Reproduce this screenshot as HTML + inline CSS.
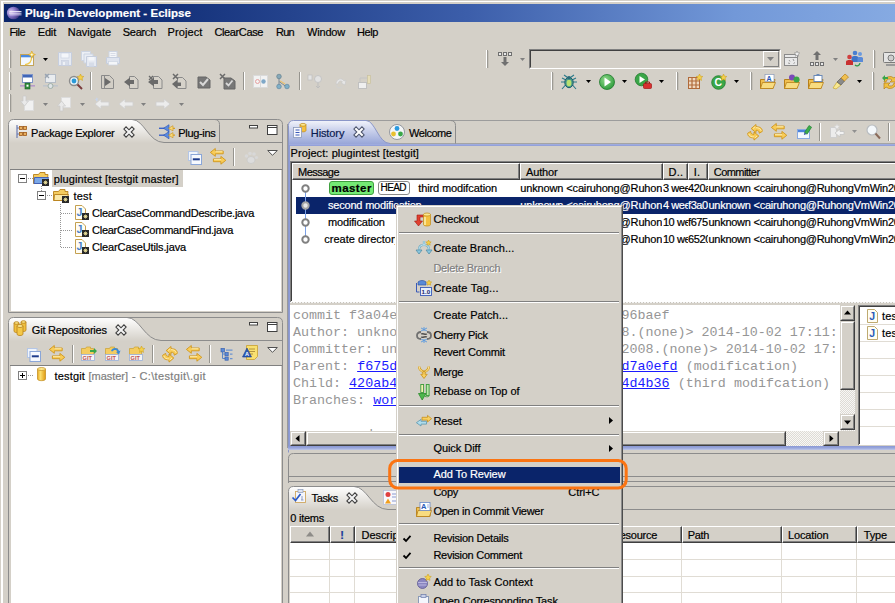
<!DOCTYPE html>
<html><head><meta charset="utf-8"><title>Plug-in Development - Eclipse</title>
<style>
html,body{margin:0;padding:0;}
body{width:895px;height:603px;overflow:hidden;position:relative;background:#d4d0c8;font-family:"Liberation Sans",sans-serif;font-size:11px;}
div,svg,span.t{position:absolute;}
span.t{white-space:pre;-webkit-text-stroke:0.2px;}
span.m{-webkit-text-stroke:0;}
svg{overflow:visible;}
</style></head><body>
<div style="left:1px;top:1px;width:894px;height:1px;background:#fff"></div>
<div style="left:1px;top:1px;width:1.6px;height:602px;background:#fff"></div>
<div style="left:4px;top:4px;width:891px;height:18px;background:linear-gradient(90deg,#0a246a 0%,#0c2870 12%,#3c5eaa 52%,#7298d8 82%,#86aae2 100%)"></div>
<svg style="left:6px;top:6px;" width="16" height="14" viewBox="0 0 16 14"><defs><radialGradient id="ecl" cx="30%" cy="40%" r="80%"><stop offset="0" stop-color="#d8c8f0"/><stop offset="0.450" stop-color="#8a78c8"/><stop offset="1" stop-color="#2a2470"/></radialGradient></defs>
<ellipse cx="7.500" cy="7" rx="6.600" ry="6.300" fill="url(#ecl)"/><rect x="3.500" y="5" width="12" height="0.900" fill="#f0ecfa"/><rect x="3" y="6.700" width="12.500" height="0.900" fill="#f0ecfa"/><rect x="3.500" y="8.400" width="12" height="0.900" fill="#d8d0f0"/></svg>
<span class="t" style="left:25px;top:5.9px;font-size:11.5px;line-height:14px;color:#fff;letter-spacing:0.039px;font-weight:bold;">Plug-in Development - Eclipse</span>
<span class="t" style="left:9.4px;top:24.6px;font-size:11px;line-height:14px;color:#000;letter-spacing:-0.531px;">File</span>
<span class="t" style="left:37.8px;top:24.6px;font-size:11px;line-height:14px;color:#000;letter-spacing:-0.189px;">Edit</span>
<span class="t" style="left:67.8px;top:24.6px;font-size:11px;line-height:14px;color:#000;letter-spacing:-0.027px;">Navigate</span>
<span class="t" style="left:122.8px;top:24.6px;font-size:11px;line-height:14px;color:#000;letter-spacing:-0.276px;">Search</span>
<span class="t" style="left:167.5px;top:24.6px;font-size:11px;line-height:14px;color:#000;letter-spacing:0.109px;">Project</span>
<span class="t" style="left:214.5px;top:24.6px;font-size:11px;line-height:14px;color:#000;letter-spacing:-0.385px;">ClearCase</span>
<span class="t" style="left:276px;top:24.6px;font-size:11px;line-height:14px;color:#000;letter-spacing:-0.726px;">Run</span>
<span class="t" style="left:307px;top:24.6px;font-size:11px;line-height:14px;color:#000;letter-spacing:-0.187px;">Window</span>
<span class="t" style="left:357px;top:24.6px;font-size:11px;line-height:14px;color:#000;letter-spacing:-0.406px;">Help</span>
<div style="left:9px;top:50px;width:1px;height:18px;background:#fff"></div>
<div style="left:10px;top:50px;width:1px;height:18px;background:#9c9a94"></div>
<div style="left:11px;top:51px;width:1px;height:17px;background:#c4c0b8"></div>
<div style="left:9px;top:72px;width:1px;height:18px;background:#fff"></div>
<div style="left:10px;top:72px;width:1px;height:18px;background:#9c9a94"></div>
<div style="left:11px;top:73px;width:1px;height:17px;background:#c4c0b8"></div>
<div style="left:9px;top:94px;width:1px;height:18px;background:#fff"></div>
<div style="left:10px;top:94px;width:1px;height:18px;background:#9c9a94"></div>
<div style="left:11px;top:95px;width:1px;height:17px;background:#c4c0b8"></div>
<div style="left:486px;top:50px;width:1px;height:18px;background:#fff"></div>
<div style="left:487px;top:50px;width:1px;height:18px;background:#9c9a94"></div>
<div style="left:488px;top:51px;width:1px;height:17px;background:#c4c0b8"></div>
<div style="left:551px;top:72px;width:1px;height:18px;background:#fff"></div>
<div style="left:552px;top:72px;width:1px;height:18px;background:#9c9a94"></div>
<div style="left:553px;top:73px;width:1px;height:17px;background:#c4c0b8"></div>
<div style="left:676px;top:72px;width:1px;height:18px;background:#fff"></div>
<div style="left:677px;top:72px;width:1px;height:18px;background:#9c9a94"></div>
<div style="left:678px;top:73px;width:1px;height:17px;background:#c4c0b8"></div>
<div style="left:750px;top:72px;width:1px;height:18px;background:#fff"></div>
<div style="left:751px;top:72px;width:1px;height:18px;background:#9c9a94"></div>
<div style="left:752px;top:73px;width:1px;height:17px;background:#c4c0b8"></div>
<div style="left:872px;top:72px;width:1px;height:18px;background:#fff"></div>
<div style="left:873px;top:72px;width:1px;height:18px;background:#9c9a94"></div>
<div style="left:874px;top:73px;width:1px;height:17px;background:#c4c0b8"></div>
<div style="left:873px;top:50px;width:1px;height:18px;background:#fff"></div>
<div style="left:874px;top:50px;width:1px;height:18px;background:#9c9a94"></div>
<div style="left:875px;top:51px;width:1px;height:17px;background:#c4c0b8"></div>
<svg style="left:20px;top:51px;" width="16" height="16" viewBox="0 0 16 16"><rect x="0.500" y="3.500" width="13" height="11" fill="#f2f8ff" stroke="#c4a458"/><rect x="1" y="4" width="12" height="2.300" fill="#4a8ae0"/><path d="M11.600 6C11.600 10.500 9 13.300 5 13.600" stroke="#f0c848" stroke-width="1.300" fill="none"/><path d="M11.8 0.0l1.100 2.500 2.500 1.100-2.500 1.100-1.100 2.500-1.100-2.500-2.500-1.100 2.500-1.100z" fill="#f8dc68" stroke="#d8a020" stroke-width=".6"/><circle cx="11.8" cy="3.6" r=".9" fill="#fffbe8"/></svg>
<svg style="left:43px;top:58px;" width="5" height="3" viewBox="0 0 5 3"><path d="M0 0H5L2.5 3Z" fill="#000"/></svg>
<svg style="left:57px;top:51px;" width="16" height="16" viewBox="0 0 16 16"><path d="M1.500 1.500h13v13h-13z" fill="#e6eaf2" stroke="#c6cede"/><rect x="4" y="2" width="8" height="5" fill="#f4f6fa" stroke="#ccd4e2" stroke-width=".7"/><rect x="4.500" y="9.500" width="7" height="5" fill="#d6dce8" stroke="#c6cede" stroke-width=".6"/><rect x="6" y="11" width="2" height="3" fill="#eef1f6"/></svg>
<svg style="left:81px;top:51px;" width="16" height="16" viewBox="0 0 16 16"><path d="M0.500 0.500h9v9h-9z" fill="#eceff5" stroke="#ccd4e2"/><path d="M3 3h9v9h-9z" fill="#e9edf4" stroke="#ccd4e2"/><path d="M5.500 5.500h10v10h-10z" fill="#e6eaf2" stroke="#c6cede"/><rect x="7.500" y="6" width="6" height="3.500" fill="#f4f6fa"/><rect x="8" y="11.500" width="5" height="4" fill="#d6dce8"/></svg>
<svg style="left:105px;top:51px;" width="16" height="16" viewBox="0 0 16 16"><rect x="4" y="0.500" width="8" height="6" fill="#f4f6f9" stroke="#ccd4e2"/><path d="M5.500 2.500h5M5.500 4.500h5" stroke="#d0d6e2" stroke-width=".8"/><path d="M1.500 6.500h13v6h-13z" fill="#dfe4ee" stroke="#c6cede"/><rect x="3.500" y="10.500" width="9" height="3.500" fill="#f4f6f9" stroke="#ccd4e2" stroke-width=".7"/></svg>
<svg style="left:20px;top:74px;" width="16" height="16" viewBox="0 0 16 16"><rect x="2.500" y="0.500" width="10" height="8" fill="#fff" stroke="#7f95c8"/><rect x="3" y="1" width="9" height="2.500" fill="#3f66b8"/><rect x="0" y="11" width="15" height="1.600" fill="#b79ac8"/><rect x="5" y="9" width="5" height="6" fill="#2e8b3a" stroke="#1c5e26" stroke-width=".6"/><rect x="6.500" y="10.700" width="2" height="2" fill="#fff"/></svg>
<svg style="left:43px;top:74px;" width="16" height="16" viewBox="0 0 16 16"><rect x="2.500" y="0.500" width="10" height="8" fill="#e9ecef" stroke="#b4bcc6"/><path d="M2 0l4 4M6 0l-4 4" stroke="#9aa4b0" stroke-width="1.200"/><rect x="0" y="11" width="15" height="1.600" fill="#c0c6cc"/><circle cx="7.500" cy="12" r="2.500" fill="#dfe3e6" stroke="#9fb0a8"/></svg>
<svg style="left:68px;top:74px;" width="16" height="16" viewBox="0 0 16 16"><circle cx="6" cy="7" r="4.500" fill="#e8f4fb" stroke="#8c8c8c" stroke-width="1.400"/><circle cx="6" cy="7" r="2.400" fill="#2a9ad8"/><path d="M9.500 10.500l4.500 4.500" stroke="#7a3b3b" stroke-width="2"/><path d="M12.500 0l1 2.200 2.300.3-1.700 1.600.4 2.300-2-1.100-2 1.100.4-2.300-1.700-1.600 2.300-.3z" fill="#f6d04a" stroke="#c89a10" stroke-width=".5"/></svg>
<div style="left:90px;top:72px;width:1px;height:18px;background:#96948e"></div>
<div style="left:91px;top:72px;width:1px;height:18px;background:#fff"></div>
<svg style="left:100px;top:74px;" width="16" height="16" viewBox="0 0 16 16"><path d="M1.500 1.500h8l4 4v9h-12z" fill="#d2cec6" stroke="#8a8a8a"/><path d="M4.500 1.500v13" stroke="#8a8a8a"/><path d="M5 4l6 4-6 4z" fill="#6a6a6a"/></svg>
<svg style="left:124px;top:74px;" width="16" height="16" viewBox="0 0 16 16"><path d="M5.500 2.500h5l3.500 3.500v8.500h-8.500z" fill="#d6d2ca" stroke="#8a8a8a"/><path d="M0 8l6-4.500v2.500h4v4h-4v2.500z" fill="#6a6a6a"/></svg>
<svg style="left:148px;top:74px;" width="16" height="16" viewBox="0 0 16 16"><path d="M5.500 2.500h5l3.500 3.500v8.500h-8.500z" fill="#d6d2ca" stroke="#8a8a8a"/><path d="M0 8l6-4.500v2.500h4v4h-4v2.500z" fill="#6a6a6a"/><path d="M1 2l4 4M5 2l-4 4" stroke="#6a6a6a" stroke-width="1.300"/></svg>
<svg style="left:172px;top:74px;" width="16" height="16" viewBox="0 0 16 16"><path d="M5.500 3.500h5l3.500 3.500v7.500h-8.500z" fill="#d6d2ca" stroke="#8a8a8a"/><path d="M0 10l5-4v2.500h4v3.500h-4v2.500z" fill="#6a6a6a"/><path d="M1 0l5 5M6 0l-5 5" stroke="#6a6a6a" stroke-width="1.500"/></svg>
<svg style="left:196px;top:74px;" width="16" height="16" viewBox="0 0 16 16"><path d="M2 3h8l4 3v8h-12z" fill="#777" stroke="#666"/><path d="M4 8l3 3 5-6" stroke="#d8d8d8" stroke-width="2" fill="none"/></svg>
<svg style="left:220px;top:74px;" width="16" height="16" viewBox="0 0 16 16"><path d="M4 4h7l4 3v8h-11z" fill="#777" stroke="#666"/><path d="M6 9l2.500 2.500 4-5" stroke="#d8d8d8" stroke-width="1.800" fill="none"/><path d="M0 0l5 5M5 0l-5 5" stroke="#6a6a6a" stroke-width="1.500"/></svg>
<div style="left:243px;top:72px;width:1px;height:18px;background:#96948e"></div>
<div style="left:244px;top:72px;width:1px;height:18px;background:#fff"></div>
<svg style="left:253px;top:74px;" width="16" height="16" viewBox="0 0 16 16"><rect x="0.500" y="1.500" width="14" height="12" fill="#f2f2f2" stroke="#dadada"/><circle cx="4.500" cy="7.500" r="2" fill="none" stroke="#e6a0a0"/><circle cx="10.500" cy="7.500" r="2.200" fill="#7fa8c8"/><path d="M7.500 1.500v12" stroke="#dadada"/></svg>
<svg style="left:276px;top:74px;" width="16" height="16" viewBox="0 0 16 16"><path d="M3 3v9M3 7.500l7 5" stroke="#7a8a98" stroke-width="1"/><path d="M4 7l5 3" stroke="#e8c070" stroke-width="1.200"/><circle cx="3" cy="2.500" r="2.300" fill="#86a8b8" stroke="#5a7888" stroke-width=".6"/><circle cx="3" cy="12.500" r="2.300" fill="#7fb0c8" stroke="#5a8098" stroke-width=".6"/><circle cx="11" cy="12.500" r="2.300" fill="#7fb0c8" stroke="#5a8098" stroke-width=".6"/></svg>
<div style="left:299px;top:72px;width:1px;height:18px;background:#96948e"></div>
<div style="left:300px;top:72px;width:1px;height:18px;background:#fff"></div>
<svg style="left:307px;top:74px;" width="16" height="16" viewBox="0 0 16 16"><rect x="1" y="1" width="4" height="5" fill="#e4e4e4" stroke="#bdbdbd" stroke-width=".7"/><circle cx="11" cy="5" r="3.500" fill="#e2e2e2" stroke="#c4c4c4"/><path d="M11 9v5l-2-2m2 2l2-2" stroke="#bdbdbd" fill="none"/></svg>
<svg style="left:333px;top:74px;" width="16" height="16" viewBox="0 0 16 16"><path d="M3 10c0-5 6-7 8-3l2-1-1 5-4-2 1.500-1c-1.500-2-4-1-4.500 2z" fill="#e6e6e6" stroke="#c8c8c8" stroke-width=".7"/><path d="M3 11l2 3 4-1" stroke="#d0d0d0" fill="none"/></svg>
<svg style="left:357px;top:74px;" width="16" height="16" viewBox="0 0 16 16"><rect x="1.500" y="8.500" width="8" height="6" fill="#efefef" stroke="#c0c0c0"/><rect x="10.500" y="1.500" width="3" height="8" fill="#e6ddb8" stroke="#c8c0a0" stroke-width=".7"/><path d="M3 8v-4h7" stroke="#c4c4c4" fill="none"/></svg>
<svg style="left:20px;top:96px;" width="16" height="16" viewBox="0 0 16 16"><path d="M4.500 4.500h9v10h-9z" fill="#f1f1f1" stroke="#dcdcdc"/><path d="M3 0h3v5h2.500l-4 5-4-5h2.500z" fill="#e9e9e9" stroke="#c9c9c9" stroke-width=".7"/></svg>
<svg style="left:43px;top:103px;" width="5" height="3" viewBox="0 0 5 3"><path d="M0 0H5L2.5 3Z" fill="#808080"/></svg>
<svg style="left:57px;top:96px;" width="16" height="16" viewBox="0 0 16 16"><path d="M4.500 1.500h9v10h-9z" fill="#f1f1f1" stroke="#dcdcdc"/><path d="M3 15h3v-5h2.500l-4-5-4 5h2.500z" fill="#e9e9e9" stroke="#c9c9c9" stroke-width=".7"/></svg>
<svg style="left:80px;top:103px;" width="5" height="3" viewBox="0 0 5 3"><path d="M0 0H5L2.5 3Z" fill="#808080"/></svg>
<svg style="left:94px;top:96px;" width="16" height="16" viewBox="0 0 16 16"><path d="M1 8l6-5v3h8v4h-8v3z" fill="#ececec" stroke="#cfcfcf" stroke-width=".8"/><path d="M2 1l1 1.500 1.500-.5-1 1.500 1 1.500-1.500-.5-1 1.500v-2l-1.500-.5 1.500-.5z" fill="#c8d4e8"/></svg>
<svg style="left:118px;top:96px;" width="16" height="16" viewBox="0 0 16 16"><path d="M1 8l6-5v3h8v4h-8v3z" fill="#ececec" stroke="#cfcfcf" stroke-width=".8"/></svg>
<svg style="left:141px;top:103px;" width="5" height="3" viewBox="0 0 5 3"><path d="M0 0H5L2.5 3Z" fill="#808080"/></svg>
<svg style="left:155px;top:96px;" width="16" height="16" viewBox="0 0 16 16"><path d="M15 8l-6-5v3h-8v4h8v3z" fill="#ececec" stroke="#cfcfcf" stroke-width=".8"/></svg>
<svg style="left:179px;top:103px;" width="5" height="3" viewBox="0 0 5 3"><path d="M0 0H5L2.5 3Z" fill="#808080"/></svg>
<svg style="left:497px;top:51px;" width="16" height="16" viewBox="0 0 16 16"><rect x="1.500" y="1.500" width="3" height="3" fill="#e8e8e8" stroke="#707070"/><rect x="6.500" y="1.500" width="3" height="3" fill="#e8e8e8" stroke="#707070"/><rect x="11.500" y="1.500" width="3" height="3" fill="#e8e8e8" stroke="#707070"/><path d="M6.500 6h3v5h2.500l-4 4-4-4h2.500z" fill="#707070"/></svg>
<svg style="left:520px;top:58px;" width="5" height="3" viewBox="0 0 5 3"><path d="M0 0H5L2.5 3Z" fill="#808080"/></svg>
<div style="left:529px;top:49px;width:252px;height:20px;background:#d4d0c8;box-sizing:border-box;border:1px solid;border-color:#808080 #fff #fff #808080"></div>
<div style="left:530px;top:50px;width:250px;height:18px;box-sizing:border-box;border:1px solid;border-color:#404040 #d4d0c8 #d4d0c8 #404040"></div>
<div style="left:763px;top:51px;width:16px;height:16px;background:#d4d0c8;box-sizing:border-box;border:1px solid;border-color:#fff #808080 #808080 #fff"></div>
<svg style="left:767px;top:57px;" width="7" height="4" viewBox="0 0 7 4"><path d="M0 0H7L3.500 4Z" fill="#808080"/></svg>
<svg style="left:784px;top:51px;" width="17" height="16" viewBox="0 0 17 16"><rect x="0.500" y="3.500" width="13" height="11" fill="#e9e9e9" stroke="#8a8a8a"/><path d="M.5 6.500h13" stroke="#8a8a8a"/><path d="M5 9l1 1.500M9 8l1 2M4 12l2 .5M9.500 12.500l1.500-1" stroke="#9a9a9a"/><path d="M13 0l.8 1.800 1.900.2-1.400 1.300.4 1.900-1.700-1-1.700 1 .4-1.900-1.400-1.300 1.900-.2z" fill="#f2f2f2" stroke="#8a8a8a" stroke-width=".6"/></svg>
<svg style="left:809px;top:51px;" width="16" height="16" viewBox="0 0 16 16"><path d="M6.500 9v-5h-2.500l4-4 4 4h-2.500v5z" fill="#707070"/><rect x="1.500" y="11.500" width="3" height="3" fill="#e8e8e8" stroke="#707070"/><rect x="6.500" y="11.500" width="3" height="3" fill="#e8e8e8" stroke="#707070"/><rect x="11.500" y="11.500" width="3" height="3" fill="#e8e8e8" stroke="#707070"/></svg>
<svg style="left:833px;top:58px;" width="5" height="3" viewBox="0 0 5 3"><path d="M0 0H5L2.5 3Z" fill="#808080"/></svg>
<svg style="left:846px;top:50px;" width="18" height="16" viewBox="0 0 18 16"><circle cx="9" cy="3" r="2.300" fill="#4a7fd0"/><path d="M5.500 12v-4.500c0-2 7-2 7 0v4.500z" fill="#3f74c8"/><circle cx="14" cy="4" r="2" fill="#6a9ae0"/><path d="M11.500 12v-4c0-1.500 5.500-1.500 5.500 0v4z" fill="#5a8ad8"/><circle cx="3.500" cy="7" r="2.300" fill="#d04040"/><path d="M0 15v-3.500c0-2 7-2 7 0v3.500z" fill="#c83030"/><path d="M9 15a3 3 0 0 0 5-2" stroke="#2a9a4a" fill="none" stroke-width="1.300"/></svg>
<svg style="left:883px;top:51px;" width="16" height="16" viewBox="0 0 16 16"><rect x="0.500" y="1.500" width="14" height="10" rx="1" fill="#e4e4e4" stroke="#7a7a7a"/><circle cx="8" cy="7" r="3" fill="#cfcfcf" stroke="#7a7a7a"/><rect x="3" y="13" width="10" height="2" fill="#9a9a9a"/></svg>
<svg style="left:561px;top:74px;" width="17" height="16" viewBox="0 0 17 16"><path d="M8 4.500L3 1M8 4.500l5-3.500M4 8H0M12 8h4M4.500 11l-3.500 4M11.500 11l3.500 4M5 6L1 4M11 6l4-2" stroke="#2a7a8a" stroke-width="1.100"/><ellipse cx="8" cy="8.500" rx="4.200" ry="5.200" fill="#4a9a8a" stroke="#1a5a6a"/><ellipse cx="8" cy="9" rx="2.400" ry="3.200" fill="#b8e070"/><circle cx="8" cy="3.800" r="1.800" fill="#2a6a7a"/></svg>
<svg style="left:586px;top:80px;" width="5" height="3" viewBox="0 0 5 3"><path d="M0 0H5L2.5 3Z" fill="#000"/></svg>
<svg style="left:599px;top:74px;" width="16" height="16" viewBox="0 0 16 16"><defs><radialGradient id="rg" cx="40%" cy="35%" r="70%"><stop offset="0" stop-color="#8fd88a"/><stop offset="1" stop-color="#2c9a3a"/></radialGradient></defs><circle cx="8" cy="8" r="7.500" fill="url(#rg)" stroke="#1f7a2c" stroke-width=".8"/><path d="M5.500 3.500l6.500 4.500-6.500 4.500z" fill="#fff"/></svg>
<svg style="left:622px;top:80px;" width="5" height="3" viewBox="0 0 5 3"><path d="M0 0H5L2.5 3Z" fill="#000"/></svg>
<svg style="left:635px;top:73px;" width="18" height="17" viewBox="0 0 18 17"><circle cx="6.500" cy="6.500" r="6.300" fill="#3aa648" stroke="#1f7a2c" stroke-width=".8"/><path d="M4.500 3l5.500 3.500-5.500 3.500z" fill="#fff"/><rect x="8.500" y="10.500" width="8" height="5" rx="1" fill="#d83030" stroke="#a01818" stroke-width=".7"/><path d="M10.500 10.500v-1.500h4v1.500" stroke="#a01818" fill="none"/></svg>
<svg style="left:659px;top:80px;" width="5" height="3" viewBox="0 0 5 3"><path d="M0 0H5L2.5 3Z" fill="#000"/></svg>
<svg style="left:687px;top:74px;" width="16" height="16" viewBox="0 0 16 16"><rect x="1.500" y="3.500" width="11" height="11" fill="#f0d8c0" stroke="#b06a3a"/><path d="M5 3v12M9 3v12M1 7h12M1 11h12" stroke="#b06a3a" stroke-width="1.200"/><path d="M12.500 0l1 2.200 2.300.3-1.700 1.600.4 2.300-2-1.100-2 1.100.4-2.300-1.700-1.600 2.300-.3z" fill="#f6d04a" stroke="#c89a10" stroke-width=".5"/></svg>
<svg style="left:711px;top:74px;" width="16" height="16" viewBox="0 0 16 16"><circle cx="7.500" cy="8.500" r="6.800" fill="#3aa648" stroke="#1f7a2c" stroke-width=".8"/><text x="3.4" y="12.3" font-family="Liberation Sans,sans-serif" font-size="10.5" font-weight="bold" fill="#fff">C</text><path d="M12.500 0l1 2.200 2.300.3-1.700 1.600.4 2.300-2-1.100-2 1.100.4-2.300-1.700-1.600 2.300-.3z" fill="#f6d04a" stroke="#c89a10" stroke-width=".5"/></svg>
<svg style="left:734px;top:80px;" width="5" height="3" viewBox="0 0 5 3"><path d="M0 0H5L2.5 3Z" fill="#000"/></svg>
<svg style="left:760px;top:74px;" width="16" height="16" viewBox="0 0 16 16"><path d="M0.500 5.500h5l1.500-2h5v2h3l-2 9h-12.500z" fill="#f0c050" stroke="#b8801a"/><path d="M2.500 8.500h13l-2.500 6h-12.500z" fill="#f8dc80" stroke="#b8801a" stroke-width=".8"/><rect x="5" y="0.500" width="9" height="7" fill="#fff" stroke="#8a9ab8" stroke-width=".7"/><text x="6.6" y="6.6" font-family="Liberation Sans,sans-serif" font-size="7" font-weight="bold" fill="#2a5ab8">A</text></svg>
<svg style="left:784px;top:74px;" width="16" height="16" viewBox="0 0 16 16"><path d="M0.500 5.500h5l1.500-2h5v2h3l-2 9h-12.500z" fill="#f0c050" stroke="#b8801a"/><path d="M2.500 8.500h13l-2.500 6h-12.500z" fill="#f8dc80" stroke="#b8801a" stroke-width=".8"/><circle cx="8" cy="3.500" r="3" fill="#7a4ab8"/><circle cx="12.500" cy="5.500" r="3" fill="#3aa648"/></svg>
<svg style="left:808px;top:74px;" width="16" height="16" viewBox="0 0 16 16"><path d="M0.500 5.500h5l1.500-2h5v2h3l-2 9h-12.500z" fill="#f0c050" stroke="#b8801a"/><path d="M2.500 8.500h13l-2.500 6h-12.500z" fill="#f8dc80" stroke="#b8801a" stroke-width=".8"/><rect x="6" y="1.500" width="8" height="6" fill="#fff" stroke="#6a8ab8"/><rect x="8.500" y="0" width="3" height="2" fill="#6a8ab8"/></svg>
<svg style="left:832px;top:74px;" width="17" height="16" viewBox="0 0 17 16"><path d="M1 14l4-6 4 3-5 4z" fill="#f8e890" stroke="#c8a830" stroke-width=".7"/><path d="M5 8l4-4 3.500 3-3.500 4z" fill="#8a8a8a" stroke="#5a5a5a" stroke-width=".7"/><path d="M9 4l4-4 3.500 3-4 4z" fill="#f0c050" stroke="#b8801a" stroke-width=".7"/></svg>
<svg style="left:857px;top:80px;" width="5" height="3" viewBox="0 0 5 3"><path d="M0 0H5L2.5 3Z" fill="#000"/></svg>
<svg style="left:882px;top:74px;" width="16" height="16" viewBox="0 0 16 16"><path d="M2 8a6 6 0 0 1 10-4l2-2v6h-6l2-2a3.500 3.500 0 0 0-6 2z" fill="#f0c040" stroke="#b8801a" stroke-width=".7"/><path d="M14 9a6 6 0 0 1-10 4l-2 2v-6h6l-2 2a3.500 3.500 0 0 0 6-2z" fill="#f0c040" stroke="#b8801a" stroke-width=".7"/><path d="M0 4l3-3v2h3v2h-3v2z" fill="#3aa648"/></svg>
<svg style="left:8px;top:119px;overflow:hidden;" width="275" height="194" viewBox="0 0 275 194"><defs><linearGradient id="gw" x1="0" y1="0" x2="0" y2="1"><stop offset="0" stop-color="#ffffff"/><stop offset="1" stop-color="#d4d0c8"/></linearGradient></defs><path d="M0.5 24.0V5.5Q0.5 0.5 5.5 0.5H124C136.16 0.5 140.64 23.5 156 23.5V24.0Z" fill="url(#gw)"/><path d="M0.5 193.5V5.5Q0.5 0.5 5.5 0.5H269.5Q274.5 0.5 274.5 5.5V193.5H0.5" fill="none" stroke="#8c8c8c"/><path d="M156 23.5H274.5" fill="none" stroke="#8c8c8c"/><path d="M124 0.5C136.16 0.5 140.64 23.5 156 23.5" fill="none" stroke="#8c8c8c"/><path d="M206.5 0.5Q211.5 0.5 211.5 5.5V23.5" fill="none" stroke="#8c8c8c"/></svg>
<svg style="left:16px;top:125px;" width="12" height="14" viewBox="0 0 12 14"><path d="M1 0v13" stroke="#6a7ab0" stroke-width="1.200"/><g fill="#e8b060" stroke="#a05a18" stroke-width=".8"><rect x="3.500" y="1.500" width="3" height="3"/><rect x="7.500" y="1.500" width="3" height="3"/><rect x="3.500" y="7.500" width="3" height="3"/><rect x="7.500" y="7.500" width="3" height="3"/></g><path d="M1 3h2M1 9h2" stroke="#6a7ab0"/></svg>
<span class="t" style="left:31px;top:125.8px;font-size:11px;line-height:14px;color:#000;letter-spacing:-0.208px;">Package Explorer</span>
<svg style="left:122.5px;top:125.5px;" width="12" height="12" viewBox="0 0 11 11"><path d="M0.800 2.800L2.800 0.800 5.500 3.500 8.200 0.800 10.200 2.800 7.500 5.500 10.200 8.200 8.200 10.200 5.500 7.500 2.800 10.200 0.800 8.200 3.500 5.500Z" fill="#f4f4f4" stroke="#404040" stroke-width="1" stroke-linejoin="miter"/></svg>
<svg style="left:159px;top:124px;" width="16" height="16" viewBox="0 0 16 16"><path d="M0 4.3H6" stroke="#3a62c8" stroke-width="1.400"/><path d="M4.500 4.3L10 0.6999999999999997V7.9Z" fill="#5a8ae0" stroke="#2a52b0" stroke-width=".6"/><path d="M9.500 4.3L14 1.6999999999999997V6.9Z" fill="#f8d878" stroke="#c8901c" stroke-width=".6"/><path d="M14 4.3H16" stroke="#d8a020" stroke-width="1.200"/><path d="M0 11.2H6" stroke="#3a62c8" stroke-width="1.400"/><path d="M4.500 11.2L10 7.6V14.799999999999999Z" fill="#5a8ae0" stroke="#2a52b0" stroke-width=".6"/><path d="M9.500 11.2L14 8.6V13.799999999999999Z" fill="#f8d878" stroke="#c8901c" stroke-width=".6"/><path d="M14 11.2H16" stroke="#d8a020" stroke-width="1.200"/></svg>
<span class="t" style="left:178.3px;top:125.8px;font-size:11px;line-height:14px;color:#000;letter-spacing:-0.33px;">Plug-ins</span>
<svg style="left:249px;top:125px;" width="10" height="4" viewBox="0 0 10 4"><rect x="0.500" y="0.500" width="8" height="2.500" fill="#fff" stroke="#404040"/></svg>
<svg style="left:267px;top:125px;" width="11" height="11" viewBox="0 0 11 11"><rect x="0.500" y="0.500" width="9.500" height="9" fill="#fff" stroke="#404040"/><path d="M0.500 2.500h9.500" stroke="#404040"/></svg>
<svg style="left:188px;top:151px;" width="14" height="14" viewBox="0 0 14 14"><rect x="0.500" y="0.500" width="9.500" height="9" fill="#f0f5fc" stroke="#b4c6e6"/><rect x="3" y="3.500" width="10.500" height="10" fill="#f6f9fe" stroke="#8aa6d8"/><rect x="4.800" y="7.300" width="7" height="2" fill="#1e3c8c"/></svg>
<svg style="left:210px;top:148px;" width="16" height="17" viewBox="0 0 16 17"><path d="M0.400 4.400L5.300 0.500V3H13.200V5.800H5.300V8.300Z" fill="#f8cc58" stroke="#d0961c" stroke-width=".9" stroke-linejoin="round"/><path d="M5.500 3.700H12.500" stroke="#fff4c0" stroke-width=".8"/><path d="M15.800 12.300L10.900 8.400V10.900H3.400V13.700H10.900V16.200Z" fill="#f8cc58" stroke="#d0961c" stroke-width=".9" stroke-linejoin="round"/><path d="M4 11.600H11" stroke="#fff4c0" stroke-width=".8"/></svg>
<div style="left:233px;top:148px;width:1px;height:18px;background:#96948e"></div>
<div style="left:234px;top:148px;width:1px;height:18px;background:#fff"></div>
<svg style="left:244px;top:150px;" width="14" height="14" viewBox="0 0 14 14"><ellipse cx="7" cy="10" rx="4" ry="3.500" fill="#dcdcdc" stroke="#c4c4c4" stroke-width=".6"/><circle cx="2.500" cy="6" r="1.800" fill="#d8d8d8"/><circle cx="6" cy="3.500" r="1.800" fill="#d8d8d8"/><circle cx="10" cy="4" r="1.800" fill="#d8d8d8"/><circle cx="12.500" cy="7.500" r="1.600" fill="#d8d8d8"/></svg>
<svg style="left:267px;top:150px;" width="11" height="6" viewBox="0 0 11 6"><path d="M0.700 0.500H10.300L5.500 5.300Z" fill="#fff" stroke="#505050" stroke-width="1"/></svg>
<div style="left:10px;top:169px;width:272px;height:1px;background:#808080"></div>
<div style="left:11px;top:170px;width:270px;height:141px;background:#fff"></div>
<div style="left:52px;top:170px;width:131px;height:17px;background:#d4d0c8"></div>
<svg style="left:18px;top:174px;" width="9" height="9" viewBox="0 0 9 9"><rect x="0.500" y="0.500" width="8" height="8" fill="#fff" stroke="#808080"/><path d="M2 4.500h5" stroke="#000"/></svg>
<div style="left:28px;top:178px;width:6px;height:1px;background:repeating-linear-gradient(90deg,#969696 0 1px,transparent 1px 2px)"></div>
<div style="left:41px;top:186px;width:1px;height:6px;background:repeating-linear-gradient(180deg,#969696 0 1px,transparent 1px 2px)"></div>
<svg style="left:37px;top:191px;" width="9" height="9" viewBox="0 0 9 9"><rect x="0.500" y="0.500" width="8" height="8" fill="#fff" stroke="#808080"/><path d="M2 4.500h5" stroke="#000"/></svg>
<div style="left:47px;top:195px;width:6px;height:1px;background:repeating-linear-gradient(90deg,#969696 0 1px,transparent 1px 2px)"></div>
<div style="left:60px;top:204px;width:1px;height:44px;background:repeating-linear-gradient(180deg,#969696 0 1px,transparent 1px 2px)"></div>
<div style="left:61px;top:213px;width:12px;height:1px;background:repeating-linear-gradient(90deg,#969696 0 1px,transparent 1px 2px)"></div>
<div style="left:61px;top:230px;width:12px;height:1px;background:repeating-linear-gradient(90deg,#969696 0 1px,transparent 1px 2px)"></div>
<div style="left:61px;top:247px;width:12px;height:1px;background:repeating-linear-gradient(90deg,#969696 0 1px,transparent 1px 2px)"></div>
<svg style="left:33px;top:171px;" width="17" height="16" viewBox="0 0 17 16"><path d="M0.500 3.500h5l1.500-2h5v2h3l-1 9h-13.500z" fill="#f4cc60" stroke="#b8801a" stroke-width=".9"/><path d="M1.500 6.500h14l-2 6h-12.500z" fill="#7aa8e8" stroke="#3a5ab8" stroke-width=".9"/><rect x="9" y="8" width="7" height="7" fill="#2a2a2a"/><path d="M12.500 9.500v4M10.500 11.500h4M11 10l3 3M14 10l-3 3" stroke="#f4e8a0" stroke-width=".8"/></svg>
<span class="t" style="left:53.8px;top:171.8px;font-size:11px;line-height:14px;color:#000;letter-spacing:0.097px;">plugintest [testgit master]</span>
<svg style="left:53px;top:188px;" width="17" height="16" viewBox="0 0 17 16"><path d="M0.500 3.500h5l1.500-2h5v2h3l-1 9h-13.500z" fill="#f4cc60" stroke="#b8801a" stroke-width=".9"/><path d="M1.500 6.500h14l-2 6h-12.500z" fill="#fae8a8" stroke="#b8801a" stroke-width=".9"/><rect x="9" y="8" width="7" height="7" fill="#2a2a2a"/><path d="M12.500 9.500v4M10.500 11.500h4M11 10l3 3M14 10l-3 3" stroke="#f4e8a0" stroke-width=".8"/></svg>
<span class="t" style="left:73.4px;top:188.8px;font-size:11px;line-height:14px;color:#000;letter-spacing:0.268px;">test</span>
<svg style="left:74px;top:204.7px;" width="16" height="16" viewBox="0 0 16 16"><path d="M1.500 0.500h6.500l3.500 3.500v10.500h-10z" fill="#fffdf4" stroke="#c4a050"/><text x="2.6" y="11" font-family="Liberation Sans,sans-serif" font-size="10.5" font-weight="bold" fill="#4a80c8">J</text><rect x="8" y="8" width="7" height="7" fill="#2a2a2a"/><path d="M11.500 9.500v4M9.500 11.500h4M10 10l3 3M13 10l-3 3" stroke="#f4e8a0" stroke-width=".8"/></svg>
<span class="t" style="left:92px;top:205.8px;font-size:11px;line-height:14px;color:#000;letter-spacing:-0.25px;">ClearCaseCommandDescribe.java</span>
<svg style="left:74px;top:221.7px;" width="16" height="16" viewBox="0 0 16 16"><path d="M1.500 0.500h6.500l3.500 3.500v10.500h-10z" fill="#fffdf4" stroke="#c4a050"/><text x="2.6" y="11" font-family="Liberation Sans,sans-serif" font-size="10.5" font-weight="bold" fill="#4a80c8">J</text><rect x="8" y="8" width="7" height="7" fill="#2a2a2a"/><path d="M11.500 9.500v4M9.500 11.500h4M10 10l3 3M13 10l-3 3" stroke="#f4e8a0" stroke-width=".8"/></svg>
<span class="t" style="left:92px;top:222.8px;font-size:11px;line-height:14px;color:#000;letter-spacing:-0.254px;">ClearCaseCommandFind.java</span>
<svg style="left:74px;top:238.7px;" width="16" height="16" viewBox="0 0 16 16"><path d="M1.500 0.500h6.500l3.500 3.500v10.500h-10z" fill="#fffdf4" stroke="#c4a050"/><text x="2.6" y="11" font-family="Liberation Sans,sans-serif" font-size="10.5" font-weight="bold" fill="#4a80c8">J</text><rect x="8" y="8" width="7" height="7" fill="#2a2a2a"/><path d="M11.500 9.500v4M9.500 11.500h4M10 10l3 3M13 10l-3 3" stroke="#f4e8a0" stroke-width=".8"/></svg>
<span class="t" style="left:92px;top:239.8px;font-size:11px;line-height:14px;color:#000;letter-spacing:-0.136px;">ClearCaseUtils.java</span>
<svg style="left:8px;top:317px;overflow:hidden;" width="275" height="294" viewBox="0 0 275 294"><defs><linearGradient id="gw" x1="0" y1="0" x2="0" y2="1"><stop offset="0" stop-color="#ffffff"/><stop offset="1" stop-color="#d4d0c8"/></linearGradient></defs><path d="M0.5 24.0V5.5Q0.5 0.5 5.5 0.5H119C131.92 0.5 136.68 23.5 153 23.5V24.0Z" fill="url(#gw)"/><path d="M0.5 293.5V5.5Q0.5 0.5 5.5 0.5H269.5Q274.5 0.5 274.5 5.5V293.5H0.5" fill="none" stroke="#8c8c8c"/><path d="M153 23.5H274.5" fill="none" stroke="#8c8c8c"/><path d="M119 0.5C131.92 0.5 136.68 23.5 153 23.5" fill="none" stroke="#8c8c8c"/></svg>
<svg style="left:13px;top:320px;" width="15" height="17" viewBox="0 0 15 17"><g stroke="#b8801a" stroke-width=".8"><path d="M1 3v8c0 2 5 2 5 0v-8z" fill="#f0c040"/><ellipse cx="3.500" cy="3" rx="2.500" ry="1.300" fill="#f8e080"/><path d="M8 2v8c0 2 5 2 5 0v-8z" fill="#f0c040"/><ellipse cx="10.500" cy="2" rx="2.500" ry="1.300" fill="#f8e080"/><path d="M4 6v8c0 2 6 2 6 0v-8z" fill="#f4c848"/><ellipse cx="7" cy="6" rx="3" ry="1.500" fill="#fbe890"/></g></svg>
<span class="t" style="left:31.8px;top:322.6px;font-size:11px;line-height:14px;color:#000;letter-spacing:-0.203px;">Git Repositories</span>
<svg style="left:114.5px;top:323.5px;" width="12" height="12" viewBox="0 0 11 11"><path d="M0.800 2.800L2.800 0.800 5.500 3.500 8.200 0.800 10.200 2.800 7.500 5.500 10.200 8.200 8.200 10.200 5.500 7.500 2.800 10.200 0.800 8.200 3.500 5.500Z" fill="#f4f4f4" stroke="#404040" stroke-width="1" stroke-linejoin="miter"/></svg>
<svg style="left:249px;top:322px;" width="10" height="4" viewBox="0 0 10 4"><rect x="0.500" y="0.500" width="8" height="2.500" fill="#fff" stroke="#404040"/></svg>
<svg style="left:267px;top:322px;" width="11" height="11" viewBox="0 0 11 11"><rect x="0.500" y="0.500" width="9.500" height="9" fill="#fff" stroke="#404040"/><path d="M0.500 2.500h9.500" stroke="#404040"/></svg>
<svg style="left:27px;top:348px;" width="14" height="14" viewBox="0 0 14 14"><rect x="0.500" y="0.500" width="9.500" height="9" fill="#f0f5fc" stroke="#b4c6e6"/><rect x="3" y="3.500" width="10.500" height="10" fill="#f6f9fe" stroke="#8aa6d8"/><rect x="4.800" y="7.300" width="7" height="2" fill="#1e3c8c"/></svg>
<svg style="left:49px;top:345px;" width="16" height="17" viewBox="0 0 16 17"><path d="M0.400 4.400L5.300 0.500V3H13.200V5.800H5.300V8.300Z" fill="#f8cc58" stroke="#d0961c" stroke-width=".9" stroke-linejoin="round"/><path d="M5.500 3.700H12.500" stroke="#fff4c0" stroke-width=".8"/><path d="M15.800 12.300L10.900 8.400V10.900H3.400V13.700H10.900V16.200Z" fill="#f8cc58" stroke="#d0961c" stroke-width=".9" stroke-linejoin="round"/><path d="M4 11.600H11" stroke="#fff4c0" stroke-width=".8"/></svg>
<div style="left:72px;top:345px;width:1px;height:18px;background:#96948e"></div>
<div style="left:73px;top:345px;width:1px;height:18px;background:#fff"></div>
<svg style="left:81px;top:346px;" width="16" height="16" viewBox="0 0 16 16"><path d="M0.500 2.500h4l1-1.500h4v1.500h3v6h-12z" fill="#f4cc60" stroke="#c8a030" stroke-width=".7"/><rect x="0.500" y="8.500" width="13" height="6" fill="#f4f4f4" stroke="#9ab0d8" stroke-width=".8"/><text x="1.6" y="13.6" font-family="Liberation Sans,sans-serif" font-size="5.6" font-weight="bold" fill="#c05050">GIT</text><path d="M9 4h4v-2l3 3-3 3v-2h-4z" fill="#3aa648"/></svg>
<svg style="left:105px;top:346px;" width="16" height="16" viewBox="0 0 16 16"><path d="M0.500 2.500h4l1-1.500h4v1.500h3v6h-12z" fill="#f4cc60" stroke="#c8a030" stroke-width=".7"/><rect x="0.500" y="8.500" width="13" height="6" fill="#f4f4f4" stroke="#9ab0d8" stroke-width=".8"/><text x="1.6" y="13.6" font-family="Liberation Sans,sans-serif" font-size="5.6" font-weight="bold" fill="#c05050">GIT</text><path d="M6 5c1-4 7-4 8 0l1.500-.5-1.500 4-3-2.500 1.500-.5c-1-2-4-2-5 0z" fill="#3a8ad8"/></svg>
<svg style="left:129px;top:346px;" width="16" height="16" viewBox="0 0 16 16"><path d="M0.500 2.500h4l1-1.500h4v1.500h3v6h-12z" fill="#f4cc60" stroke="#c8a030" stroke-width=".7"/><rect x="0.500" y="8.500" width="13" height="6" fill="#f4f4f4" stroke="#9ab0d8" stroke-width=".8"/><text x="1.6" y="13.6" font-family="Liberation Sans,sans-serif" font-size="5.6" font-weight="bold" fill="#c05050">GIT</text><path d="M12.500 0l1 2.200 2.300.3-1.700 1.600.4 2.300-2-1.100-2 1.100.4-2.300-1.700-1.600 2.300-.3z" fill="#f6d04a" stroke="#c89a10" stroke-width=".5"/></svg>
<div style="left:152px;top:345px;width:1px;height:18px;background:#96948e"></div>
<div style="left:153px;top:345px;width:1px;height:18px;background:#fff"></div>
<svg style="left:162px;top:346px;" width="16" height="16" viewBox="0 0 16 16"><path d="M9 0.500L4.200 4.600 9 8.600V6.200C11.300 6.200 12.300 7.200 12.300 9.200L15.300 7.400C15.300 4 12.800 2.700 9 2.700Z" fill="#f8cc58" stroke="#d0961c" stroke-width=".9" stroke-linejoin="round"/><path d="M6 4.500L8.300 2.600M9 3.600C11.500 3.600 13.500 4.500 14.300 6.800" stroke="#fff4c0" stroke-width=".8" fill="none"/><g transform="rotate(180 8 8.300)"><path d="M9 0.500L4.200 4.600 9 8.600V6.200C11.300 6.200 12.300 7.200 12.300 9.200L15.300 7.400C15.300 4 12.800 2.700 9 2.700Z" fill="#f8cc58" stroke="#d0961c" stroke-width=".9" stroke-linejoin="round"/><path d="M6 4.500L8.300 2.600M9 3.600C11.500 3.600 13.500 4.500 14.300 6.800" stroke="#fff4c0" stroke-width=".8" fill="none"/></g></svg>
<svg style="left:186px;top:345px;" width="16" height="17" viewBox="0 0 16 17"><path d="M0.400 4.400L5.300 0.500V3H13.200V5.800H5.300V8.300Z" fill="#f8cc58" stroke="#d0961c" stroke-width=".9" stroke-linejoin="round"/><path d="M5.500 3.700H12.500" stroke="#fff4c0" stroke-width=".8"/><path d="M15.800 12.300L10.900 8.400V10.900H3.400V13.700H10.900V16.200Z" fill="#f8cc58" stroke="#d0961c" stroke-width=".9" stroke-linejoin="round"/><path d="M4 11.600H11" stroke="#fff4c0" stroke-width=".8"/></svg>
<div style="left:209px;top:345px;width:1px;height:18px;background:#96948e"></div>
<div style="left:210px;top:345px;width:1px;height:18px;background:#fff"></div>
<svg style="left:220px;top:347px;" width="14" height="14" viewBox="0 0 14 14"><path d="M2.500 4.500V11.500M2.500 7H5M2.500 11.500H5" stroke="#5a86c8" fill="none"/><rect x="1" y="1.500" width="3.400" height="3.400" fill="#5a8ad8" stroke="#3a62b0" stroke-width=".7"/><rect x="5" y="5.500" width="3.200" height="3.200" fill="#5a8ad8" stroke="#3a62b0" stroke-width=".7"/><rect x="5" y="10" width="3.200" height="3.200" fill="#5a8ad8" stroke="#3a62b0" stroke-width=".7"/><path d="M6 3.200H12.500M10 7.200H12.500M10 11.600H12.500" stroke="#6a92d0" stroke-width="1.200"/></svg>
<svg style="left:242px;top:345px;" width="16" height="16" viewBox="0 0 16 16"><path d="M4.500 0.500h11v11l-3 3h-8z" fill="#f8e070" stroke="#c8a030" stroke-width=".8"/><path d="M7 4h6M7 6.500h6M7 9h4" stroke="#a08030" stroke-width=".8"/><path d="M0.500 12l4.500-9 4.500 9z" fill="#2a5ab8" stroke="#1a3a88" stroke-width=".6"/><text x="3.1" y="11.3" font-family="Liberation Sans,sans-serif" font-size="5.5" font-weight="bold" fill="#fff">A</text></svg>
<svg style="left:267px;top:347px;" width="11" height="6" viewBox="0 0 11 6"><path d="M0.700 0.500H10.300L5.500 5.300Z" fill="#fff" stroke="#505050" stroke-width="1"/></svg>
<div style="left:10px;top:365px;width:272px;height:1px;background:#808080"></div>
<div style="left:11px;top:366px;width:270px;height:240px;background:#fff"></div>
<svg style="left:18px;top:371px;" width="9" height="9" viewBox="0 0 9 9"><rect x="0.500" y="0.500" width="8" height="8" fill="#fff" stroke="#808080"/><path d="M2 4.500h5" stroke="#000"/><path d="M4.500 2v5" stroke="#000"/></svg>
<div style="left:28px;top:375px;width:6px;height:1px;background:repeating-linear-gradient(90deg,#969696 0 1px,transparent 1px 2px)"></div>
<svg style="left:37px;top:367px;" width="10" height="15" viewBox="0 0 10 15"><defs><linearGradient id="cy" x1="0" y1="0" x2="1" y2="0"><stop offset="0" stop-color="#e8a820"/><stop offset="0.350" stop-color="#fce070"/><stop offset="1" stop-color="#e09a10"/></linearGradient></defs><path d="M0.500 2v10c0 2.200 8 2.200 8 0v-10z" fill="url(#cy)" stroke="#c08a18" stroke-width=".7"/><ellipse cx="4.500" cy="2" rx="4" ry="1.500" fill="#fbe890" stroke="#c08a18" stroke-width=".7"/></svg>
<span class="t" style="left:54.5px;top:368.6px;font-size:11px;line-height:14px;color:#000;letter-spacing:0.165px;">testgit</span>
<span class="t" style="left:88.5px;top:368.6px;font-size:11px;line-height:14px;color:#808080;letter-spacing:-0.029px;">[master]</span>
<span class="t" style="left:132px;top:368.6px;font-size:11px;line-height:14px;color:#808080;letter-spacing:0.362px;">- C:\testgit\.git</span>
<div style="left:287px;top:124px;width:1px;height:324px;background:#9a9a9a"></div>
<svg style="left:288px;top:120px;overflow:hidden;" width="613" height="333" viewBox="0 0 613 333"><defs><linearGradient id="gb" x1="0" y1="0" x2="0" y2="1"><stop offset="0" stop-color="#f2f4fb"/><stop offset="0.350" stop-color="#d0d6ee"/><stop offset="1" stop-color="#98a6d8"/></linearGradient></defs><path d="M0.5 24.0V5.5Q0.5 0.5 5.5 0.5H78C87.12 0.5 90.48 23.5 102 23.5V24.0Z" fill="url(#gb)"/><path d="M78 0.5H618" fill="none" stroke="#9c9c9c"/><path d="M0.5 332.5V5.5Q0.5 0.5 5.5 0.5H78" fill="none" stroke="#8a96c8"/><path d="M102 23.5H618" fill="none" stroke="#a4a4a4"/><path d="M78 0.5C87.12 0.5 90.48 23.5 102 23.5" fill="none" stroke="#8a96c8"/><path d="M162.5 0.5Q167.5 0.5 167.5 5.5V23.5" fill="none" stroke="#8c8c8c"/></svg>
<div style="left:289px;top:144px;width:606px;height:2px;background:linear-gradient(180deg,#a4b0e0,#8e9cd8)"></div>
<div style="left:289px;top:145px;width:1px;height:302px;background:#8e9cd6"></div>
<div style="left:288px;top:446px;width:607px;height:4px;background:linear-gradient(180deg,#8a98d4 0%,#98a6dc 50%,#c0c8e8 100%)"></div>
<svg style="left:293px;top:123px;" width="14" height="16" viewBox="0 0 14 16"><g stroke="#c08a18" stroke-width=".7"><path d="M7 1.500v6c0 1.800 6 1.800 6 0v-6z" fill="#f4c040"/><ellipse cx="10" cy="1.800" rx="3" ry="1.400" fill="#fbe890"/></g><rect x="0.500" y="4.500" width="8" height="10" fill="#f8f8fc" stroke="#8a9ab8" stroke-width=".8"/><path d="M2.500 7h4M2.500 9.500h4M2.500 12h4" stroke="#3a5ab8" stroke-width="1"/></svg>
<span class="t" style="left:310.8px;top:125.8px;font-size:11px;line-height:14px;color:#0a1a50;letter-spacing:-0.104px;">History</span>
<svg style="left:352.5px;top:125.5px;" width="12" height="12" viewBox="0 0 11 11"><path d="M0.800 2.800L2.800 0.800 5.500 3.500 8.200 0.800 10.200 2.800 7.500 5.500 10.200 8.200 8.200 10.200 5.500 7.500 2.800 10.200 0.800 8.200 3.500 5.500Z" fill="#ffffff" stroke="#505870" stroke-width="1" stroke-linejoin="miter"/></svg>
<svg style="left:389px;top:124px;" width="16" height="16" viewBox="0 0 16 16"><circle cx="8" cy="8" r="7.500" fill="#f4f6f8" stroke="#8a9098" stroke-width=".9"/><circle cx="8" cy="4.500" r="2.400" fill="#2a9ae0"/><circle cx="4.500" cy="10" r="2.400" fill="#e8c030"/><circle cx="11.500" cy="10" r="2.400" fill="#3aa648"/></svg>
<span class="t" style="left:409px;top:125.8px;font-size:11px;line-height:14px;color:#000;letter-spacing:-0.449px;">Welcome</span>
<svg style="left:747px;top:124px;" width="16" height="16" viewBox="0 0 16 16"><path d="M9 0.500L4.200 4.600 9 8.600V6.200C11.300 6.200 12.300 7.200 12.300 9.200L15.300 7.400C15.300 4 12.800 2.700 9 2.700Z" fill="#f8cc58" stroke="#d0961c" stroke-width=".9" stroke-linejoin="round"/><path d="M6 4.500L8.300 2.600M9 3.600C11.500 3.600 13.500 4.500 14.300 6.800" stroke="#fff4c0" stroke-width=".8" fill="none"/><g transform="rotate(180 8 8.300)"><path d="M9 0.500L4.200 4.600 9 8.600V6.200C11.300 6.200 12.300 7.200 12.300 9.200L15.300 7.400C15.300 4 12.800 2.700 9 2.700Z" fill="#f8cc58" stroke="#d0961c" stroke-width=".9" stroke-linejoin="round"/><path d="M6 4.500L8.300 2.600M9 3.600C11.500 3.600 13.500 4.500 14.300 6.800" stroke="#fff4c0" stroke-width=".8" fill="none"/></g></svg>
<svg style="left:771px;top:123px;" width="16" height="17" viewBox="0 0 16 17"><path d="M0.400 4.400L5.300 0.500V3H13.200V5.800H5.300V8.300Z" fill="#f8cc58" stroke="#d0961c" stroke-width=".9" stroke-linejoin="round"/><path d="M5.500 3.700H12.500" stroke="#fff4c0" stroke-width=".8"/><path d="M15.800 12.300L10.900 8.400V10.900H3.400V13.700H10.900V16.200Z" fill="#f8cc58" stroke="#d0961c" stroke-width=".9" stroke-linejoin="round"/><path d="M4 11.600H11" stroke="#fff4c0" stroke-width=".8"/></svg>
<svg style="left:796px;top:124px;" width="16" height="16" viewBox="0 0 16 16"><rect x="1.500" y="5.500" width="12" height="9" fill="#f4f9ff" stroke="#8aaae0"/><rect x="2" y="6" width="11" height="2.200" fill="#4a82dc"/><path d="M8.500 8.500l4.500-7 2.600 1.700-4.500 7z" fill="#3cae4c" stroke="#1f7a2c" stroke-width=".6"/><path d="M8.500 8.500l-.6 2.600 2.600-1" fill="#2a4a9a"/></svg>
<div style="left:819px;top:123px;width:1px;height:18px;background:#96948e"></div>
<div style="left:820px;top:123px;width:1px;height:18px;background:#fff"></div>
<svg style="left:829px;top:124px;" width="16" height="16" viewBox="0 0 16 16"><rect x="1.500" y="3.500" width="6" height="10" fill="#ececec" stroke="#cfcfcf"/><path d="M6 9l5-4v2.500h4v3h-4v2.500z" fill="#f2f2f2" stroke="#c4c4c4" stroke-width=".8"/><path d="M8 0l.8 1.800 1.900.2-1.400 1.300.4 1.900-1.700-1-1.700 1 .4-1.900-1.400-1.300 1.900-.2z" fill="#ececec" stroke="#d0d0d0" stroke-width=".5"/></svg>
<svg style="left:852px;top:130px;" width="5" height="3" viewBox="0 0 5 3"><path d="M0 0H5L2.5 3Z" fill="#909090"/></svg>
<svg style="left:866px;top:124px;" width="16" height="16" viewBox="0 0 16 16"><circle cx="6" cy="6" r="5" fill="#f4f8fb" stroke="#b8bcc0" stroke-width="1.200"/><path d="M9.500 9.500l4.500 5" stroke="#8a6a5a" stroke-width="2"/></svg>
<div style="left:888px;top:123px;width:1px;height:18px;background:#96948e"></div>
<div style="left:889px;top:123px;width:1px;height:18px;background:#fff"></div>
<span class="t" style="left:290.5px;top:146.1px;font-size:11px;line-height:14px;color:#000;letter-spacing:0.088px;">Project: plugintest [testgit]</span>
<div style="left:290px;top:161px;width:610px;height:141px;background:#fff"></div>
<div style="left:290px;top:161px;width:610px;height:1px;background:#808080"></div>
<div style="left:290px;top:161px;width:1px;height:141px;background:#808080"></div>
<div style="left:291px;top:162px;width:609px;height:1px;background:#404040"></div>
<div style="left:291px;top:162px;width:1px;height:139px;background:#404040"></div>
<div style="left:291px;top:301px;width:609px;height:1px;background:#fff"></div>
<div style="left:292px;top:163px;width:228px;height:17px;background:#d4d0c8;box-sizing:border-box;border-right:1px solid #404040;border-bottom:1px solid #404040;border-top:1px solid #fff;border-left:1px solid #fff"></div>
<div style="left:293px;top:164px;width:226px;height:15px;box-sizing:border-box;border-right:1px solid #808080;border-bottom:1px solid #808080"></div>
<span class="t" style="left:298px;top:164.6px;font-size:11px;line-height:14px;color:#000;letter-spacing:-0.519px;">Message</span>
<div style="left:520px;top:163px;width:143px;height:17px;background:#d4d0c8;box-sizing:border-box;border-right:1px solid #404040;border-bottom:1px solid #404040;border-top:1px solid #fff;border-left:1px solid #fff"></div>
<div style="left:521px;top:164px;width:141px;height:15px;box-sizing:border-box;border-right:1px solid #808080;border-bottom:1px solid #808080"></div>
<span class="t" style="left:526px;top:164.6px;font-size:11px;line-height:14px;color:#000;letter-spacing:-0.135px;">Author</span>
<div style="left:663px;top:163px;width:25px;height:17px;background:#d4d0c8;box-sizing:border-box;border-right:1px solid #404040;border-bottom:1px solid #404040;border-top:1px solid #fff;border-left:1px solid #fff"></div>
<div style="left:664px;top:164px;width:23px;height:15px;box-sizing:border-box;border-right:1px solid #808080;border-bottom:1px solid #808080"></div>
<span class="t" style="left:668.6px;top:164.6px;font-size:11px;line-height:14px;color:#000;letter-spacing:0.248px;">D..</span>
<div style="left:688px;top:163px;width:20px;height:17px;background:#d4d0c8;box-sizing:border-box;border-right:1px solid #404040;border-bottom:1px solid #404040;border-top:1px solid #fff;border-left:1px solid #fff"></div>
<div style="left:689px;top:164px;width:18px;height:15px;box-sizing:border-box;border-right:1px solid #808080;border-bottom:1px solid #808080"></div>
<span class="t" style="left:693.8px;top:164.6px;font-size:11px;line-height:14px;color:#000;letter-spacing:0.194px;">I.</span>
<div style="left:708px;top:163px;width:292px;height:17px;background:#d4d0c8;box-sizing:border-box;border-right:1px solid #404040;border-bottom:1px solid #404040;border-top:1px solid #fff;border-left:1px solid #fff"></div>
<div style="left:709px;top:164px;width:290px;height:15px;box-sizing:border-box;border-right:1px solid #808080;border-bottom:1px solid #808080"></div>
<span class="t" style="left:713.8px;top:164.6px;font-size:11px;line-height:14px;color:#000;letter-spacing:-0.558px;">Committer</span>
<div style="left:296px;top:197px;width:604px;height:17px;background:#0a246a"></div>
<div style="left:305px;top:189px;width:1px;height:50px;background:#7aa0e8"></div>
<svg style="left:301px;top:183.8px;" width="9" height="9" viewBox="0 0 9 9"><circle cx="4.500" cy="4.500" r="3.200" fill="#fff" stroke="#808080" stroke-width="2"/></svg>
<div style="left:292px;top:181.3px;width:227px;height:14px;overflow:hidden">
<span class="t" style="left:126.19999999999999px;top:0.0px;font-size:11px;line-height:14px;color:#000;letter-spacing:-0.112px;">third modifcation</span></div>
<div style="left:520px;top:181.3px;width:142px;height:14px;overflow:hidden">
<span class="t" style="left:0.2999999999999545px;top:0.0px;font-size:11px;line-height:14px;color:#000;letter-spacing:-0.142px;">unknown &lt;cairuhong@RuhongVmWin2008.(none)&gt;</span></div>
<div style="left:662px;top:181.3px;width:25.799999999999955px;height:14px;overflow:hidden">
<span class="t" style="left:0.8999999999999773px;top:0.0px;font-size:11px;line-height:14px;color:#000;letter-spacing:-0.4px;">3 weeks ago</span></div>
<div style="left:687.8px;top:181.3px;width:20.5px;height:14px;overflow:hidden">
<span class="t" style="left:0.20000000000004547px;top:0.0px;font-size:11px;line-height:14px;color:#000;letter-spacing:-0.4px;">420ab4c</span></div>
<div style="left:708.3px;top:181.3px;width:191.70000000000005px;height:14px;overflow:hidden">
<span class="t" style="left:0.10000000000002274px;top:0.0px;font-size:11px;line-height:14px;color:#000;letter-spacing:-0.248px;">unknown &lt;cairuhong@RuhongVmWin2008.(none)&gt;</span></div>
<svg style="left:301px;top:200.7px;" width="9" height="9" viewBox="0 0 9 9"><circle cx="4.500" cy="4.500" r="3.200" fill="#e8e8e8" stroke="#a4a4a4" stroke-width="2"/></svg>
<div style="left:292px;top:198.2px;width:227px;height:14px;overflow:hidden">
<span class="t" style="left:36px;top:0.0px;font-size:11px;line-height:14px;color:#fff;letter-spacing:-0.196px;">second modification</span></div>
<div style="left:520px;top:198.2px;width:142px;height:14px;overflow:hidden">
<span class="t" style="left:0.2999999999999545px;top:0.0px;font-size:11px;line-height:14px;color:#fff;letter-spacing:-0.142px;">unknown &lt;cairuhong@RuhongVmWin2008.(none)&gt;</span></div>
<div style="left:662px;top:198.2px;width:25.799999999999955px;height:14px;overflow:hidden">
<span class="t" style="left:0.8999999999999773px;top:0.0px;font-size:11px;line-height:14px;color:#fff;letter-spacing:-0.4px;">4 weeks ago</span></div>
<div style="left:687.8px;top:198.2px;width:20.5px;height:14px;overflow:hidden">
<span class="t" style="left:0.20000000000004547px;top:0.0px;font-size:11px;line-height:14px;color:#fff;letter-spacing:-0.4px;">f3a04e7</span></div>
<div style="left:708.3px;top:198.2px;width:191.70000000000005px;height:14px;overflow:hidden">
<span class="t" style="left:0.10000000000002274px;top:0.0px;font-size:11px;line-height:14px;color:#fff;letter-spacing:-0.248px;">unknown &lt;cairuhong@RuhongVmWin2008.(none)&gt;</span></div>
<svg style="left:301px;top:217.7px;" width="9" height="9" viewBox="0 0 9 9"><circle cx="4.500" cy="4.500" r="3.200" fill="#fff" stroke="#808080" stroke-width="2"/></svg>
<div style="left:292px;top:215.2px;width:227px;height:14px;overflow:hidden">
<span class="t" style="left:36px;top:0.0px;font-size:11px;line-height:14px;color:#000;letter-spacing:-0.158px;">modification</span></div>
<div style="left:520px;top:215.2px;width:142px;height:14px;overflow:hidden">
<span class="t" style="left:0.2999999999999545px;top:0.0px;font-size:11px;line-height:14px;color:#000;letter-spacing:-0.142px;">unknown &lt;cairuhong@RuhongVmWin2008.(none)&gt;</span></div>
<div style="left:662px;top:215.2px;width:25.799999999999955px;height:14px;overflow:hidden">
<span class="t" style="left:0.8999999999999773px;top:0.0px;font-size:11px;line-height:14px;color:#000;letter-spacing:-0.4px;">10 weeks ago</span></div>
<div style="left:687.8px;top:215.2px;width:20.5px;height:14px;overflow:hidden">
<span class="t" style="left:0.20000000000004547px;top:0.0px;font-size:11px;line-height:14px;color:#000;letter-spacing:-0.4px;">f675d2b</span></div>
<div style="left:708.3px;top:215.2px;width:191.70000000000005px;height:14px;overflow:hidden">
<span class="t" style="left:0.10000000000002274px;top:0.0px;font-size:11px;line-height:14px;color:#000;letter-spacing:-0.248px;">unknown &lt;cairuhong@RuhongVmWin2008.(none)&gt;</span></div>
<svg style="left:301px;top:234.6px;" width="9" height="9" viewBox="0 0 9 9"><circle cx="4.500" cy="4.500" r="3.200" fill="#fff" stroke="#808080" stroke-width="2"/></svg>
<div style="left:292px;top:232.1px;width:103px;height:14px;overflow:hidden">
<span class="t" style="left:32.30000000000001px;top:0.0px;font-size:11px;line-height:14px;color:#000;letter-spacing:-0.001px;">create directory</span></div>
<div style="left:520px;top:232.1px;width:142px;height:14px;overflow:hidden">
<span class="t" style="left:0.2999999999999545px;top:0.0px;font-size:11px;line-height:14px;color:#000;letter-spacing:-0.142px;">unknown &lt;cairuhong@RuhongVmWin2008.(none)&gt;</span></div>
<div style="left:662px;top:232.1px;width:25.799999999999955px;height:14px;overflow:hidden">
<span class="t" style="left:0.8999999999999773px;top:0.0px;font-size:11px;line-height:14px;color:#000;letter-spacing:-0.4px;">10 weeks ago</span></div>
<div style="left:687.8px;top:232.1px;width:20.5px;height:14px;overflow:hidden">
<span class="t" style="left:0.20000000000004547px;top:0.0px;font-size:11px;line-height:14px;color:#000;letter-spacing:-0.4px;">6520c1a</span></div>
<div style="left:708.3px;top:232.1px;width:191.70000000000005px;height:14px;overflow:hidden">
<span class="t" style="left:0.10000000000002274px;top:0.0px;font-size:11px;line-height:14px;color:#000;letter-spacing:-0.248px;">unknown &lt;cairuhong@RuhongVmWin2008.(none)&gt;</span></div>
<div style="left:329px;top:181px;width:45px;height:14px;background:#74ea74;border:1px solid #3f9f3f;border-radius:3px;box-sizing:border-box"></div>
<span class="t" style="left:331.6px;top:181.3px;font-size:11.5px;line-height:14px;color:#000;letter-spacing:0.414px;font-weight:bold;">master</span>
<div style="left:378px;top:181px;width:32px;height:14px;background:#fff;border:1.500px solid #8a8a8a;border-radius:3px;box-sizing:border-box"></div>
<span class="t" style="left:380.5px;top:181.3px;font-size:10px;line-height:14px;color:#000;letter-spacing:-0.571px;">HEAD</span>
<div style="left:290px;top:302px;width:610px;height:1px;background:repeating-linear-gradient(90deg,#f4f4f4 0 2px,#c8c4bc 2px 3px)"></div>
<div style="left:290px;top:305px;width:566px;height:141px;background:#fff"></div>
<div style="left:290px;top:307.3px;width:548px;height:17px;overflow:hidden">
<span class="t m" style="left:3.0px;top:0.0px;font-size:13.37px;line-height:17px;color:#969696;letter-spacing:-0.004999999999999005px;font-family:'Liberation Mono',monospace;">commit f3a04e7c2d9b8a1f6e5d4c3b2a1908f7e696baef</span></div>
<div style="left:290px;top:324.3px;width:548px;height:17px;overflow:hidden">
<span class="t m" style="left:3.0px;top:0.0px;font-size:13.37px;line-height:17px;color:#969696;letter-spacing:-0.004999999999999005px;font-family:'Liberation Mono',monospace;">Author: unknown &lt;cairuhong@RuhongVmWin2008.(none)&gt; 2014-10-02 17:11:28</span></div>
<div style="left:290px;top:341.3px;width:548px;height:17px;overflow:hidden">
<span class="t m" style="left:3.0px;top:0.0px;font-size:13.37px;line-height:17px;color:#969696;letter-spacing:-0.004999999999999005px;font-family:'Liberation Mono',monospace;">Committer: unknown &lt;cairuhong@RuhongVmWin2008.(none)&gt; 2014-10-02 17:11:28</span></div>
<div style="left:290px;top:358.3px;width:548px;height:17px;overflow:hidden">
<span class="t m" style="left:3.0px;top:0.0px;font-size:13.37px;line-height:17px;color:#969696;letter-spacing:-0.004999999999999005px;font-family:'Liberation Mono',monospace;">Parent: </span></div>
<div style="left:290px;top:358.3px;width:548px;height:17px;overflow:hidden">
<span class="t m" style="left:67.13599999999997px;top:0.0px;font-size:13.37px;line-height:17px;color:#1a1aff;letter-spacing:-0.004999999999999005px;font-family:'Liberation Mono',monospace;text-decoration:underline;">f675d2b81c3e4a5f6071829304a5b6c7dd7a0efd</span></div>
<div style="left:290px;top:358.3px;width:548px;height:17px;overflow:hidden">
<span class="t m" style="left:387.8159999999999px;top:0.0px;font-size:13.37px;line-height:17px;color:#969696;letter-spacing:-0.004999999999999005px;font-family:'Liberation Mono',monospace;"> (modification)</span></div>
<div style="left:290px;top:375.3px;width:548px;height:17px;overflow:hidden">
<span class="t m" style="left:3.0px;top:0.0px;font-size:13.37px;line-height:17px;color:#969696;letter-spacing:-0.004999999999999005px;font-family:'Liberation Mono',monospace;">Child: </span></div>
<div style="left:290px;top:375.3px;width:548px;height:17px;overflow:hidden">
<span class="t m" style="left:59.11900000000003px;top:0.0px;font-size:13.37px;line-height:17px;color:#1a1aff;letter-spacing:-0.004999999999999005px;font-family:'Liberation Mono',monospace;text-decoration:underline;">420ab4c5d6e7f8091a2b3c4d5e6f7081924d4b36</span></div>
<div style="left:290px;top:375.3px;width:548px;height:17px;overflow:hidden">
<span class="t m" style="left:379.799px;top:0.0px;font-size:13.37px;line-height:17px;color:#969696;letter-spacing:-0.004999999999999005px;font-family:'Liberation Mono',monospace;"> (third modifcation)</span></div>
<div style="left:290px;top:392.3px;width:548px;height:17px;overflow:hidden">
<span class="t m" style="left:3.0px;top:0.0px;font-size:13.37px;line-height:17px;color:#969696;letter-spacing:-0.004999999999999005px;font-family:'Liberation Mono',monospace;">Branches: </span></div>
<div style="left:290px;top:392.3px;width:548px;height:17px;overflow:hidden">
<span class="t m" style="left:83.16999999999996px;top:0.0px;font-size:13.37px;line-height:17px;color:#1a1aff;letter-spacing:-0.004999999999999005px;font-family:'Liberation Mono',monospace;text-decoration:underline;">working</span></div>
<div style="left:290px;top:392.3px;width:548px;height:17px;overflow:hidden">
<span class="t m" style="left:139.289px;top:0.0px;font-size:13.37px;line-height:17px;color:#969696;letter-spacing:-0.004999999999999005px;font-family:'Liberation Mono',monospace;">, </span></div>
<div style="left:290px;top:392.3px;width:548px;height:17px;overflow:hidden">
<span class="t m" style="left:155.32299999999998px;top:0.0px;font-size:13.37px;line-height:17px;color:#1a1aff;letter-spacing:-0.004999999999999005px;font-family:'Liberation Mono',monospace;text-decoration:underline;">master</span></div>
<div style="left:290px;top:426.3px;width:548px;height:17px;overflow:hidden">
<span class="t m" style="left:3.0px;top:0.0px;font-size:13.37px;line-height:17px;color:#969696;letter-spacing:-0.004999999999999005px;font-family:'Liberation Mono',monospace;">    second modification</span></div>
<div style="left:840px;top:305px;width:15px;height:126px;background-color:#e9e7e3;background-image:repeating-conic-gradient(#f8f7f5 0 25%,#dedbd5 0 50%);background-size:2px 2px;"></div>
<div style="left:840px;top:305px;width:15px;height:16px;background:#d4d0c8;box-sizing:border-box;border:1px solid;border-color:#d4d0c8 #404040 #404040 #d4d0c8"></div>
<div style="left:841px;top:306px;width:13px;height:14px;box-sizing:border-box;border:1px solid;border-color:#fff #808080 #808080 #fff"></div>
<svg style="left:0;top:0" width="895" height="603"><path d="M844.0 314.5H851.0L847.5 310.5Z" fill="#000"/></svg>
<div style="left:840px;top:321px;width:15px;height:69px;background:#d4d0c8;box-sizing:border-box;border:1px solid;border-color:#d4d0c8 #404040 #404040 #d4d0c8"></div>
<div style="left:841px;top:322px;width:13px;height:67px;box-sizing:border-box;border:1px solid;border-color:#fff #808080 #808080 #fff"></div>
<div style="left:840px;top:414px;width:15px;height:16px;background:#d4d0c8;box-sizing:border-box;border:1px solid;border-color:#d4d0c8 #404040 #404040 #d4d0c8"></div>
<div style="left:841px;top:415px;width:13px;height:14px;box-sizing:border-box;border:1px solid;border-color:#fff #808080 #808080 #fff"></div>
<svg style="left:0;top:0" width="895" height="603"><path d="M844.0 420.5H851.0L847.5 424.5Z" fill="#000"/></svg>
<div style="left:290px;top:431px;width:549px;height:15px;background-color:#e9e7e3;background-image:repeating-conic-gradient(#f8f7f5 0 25%,#dedbd5 0 50%);background-size:2px 2px;"></div>
<div style="left:290px;top:431px;width:16px;height:15px;background:#d4d0c8;box-sizing:border-box;border:1px solid;border-color:#d4d0c8 #404040 #404040 #d4d0c8"></div>
<div style="left:291px;top:432px;width:14px;height:13px;box-sizing:border-box;border:1px solid;border-color:#fff #808080 #808080 #fff"></div>
<svg style="left:0;top:0" width="895" height="603"><path d="M299.5 435.0V442.0L295.5 438.5Z" fill="#000"/></svg>
<div style="left:306px;top:431px;width:480px;height:15px;background:#d4d0c8;box-sizing:border-box;border:1px solid;border-color:#d4d0c8 #404040 #404040 #d4d0c8"></div>
<div style="left:307px;top:432px;width:478px;height:13px;box-sizing:border-box;border:1px solid;border-color:#fff #808080 #808080 #fff"></div>
<div style="left:823px;top:431px;width:16px;height:15px;background:#d4d0c8;box-sizing:border-box;border:1px solid;border-color:#d4d0c8 #404040 #404040 #d4d0c8"></div>
<div style="left:824px;top:432px;width:14px;height:13px;box-sizing:border-box;border:1px solid;border-color:#fff #808080 #808080 #fff"></div>
<svg style="left:0;top:0" width="895" height="603"><path d="M829.5 435.0V442.0L833.5 438.5Z" fill="#000"/></svg>
<div style="left:839px;top:431px;width:17px;height:15px;background:#d4d0c8"></div>
<div style="left:855px;top:305px;width:4px;height:141px;background:#d4d0c8"></div>
<div style="left:859px;top:306px;width:40px;height:139px;background:#fff"></div>
<div style="left:858px;top:305px;width:40px;height:1px;background:#808080"></div>
<div style="left:858px;top:305px;width:1px;height:140px;background:#808080"></div>
<div style="left:859px;top:306px;width:40px;height:1px;background:#404040"></div>
<div style="left:859px;top:306px;width:1px;height:138px;background:#404040"></div>
<div style="left:860px;top:324px;width:40px;height:1px;background:#e0dcd4"></div>
<div style="left:860px;top:341px;width:40px;height:1px;background:#e0dcd4"></div>
<div style="left:860px;top:358px;width:40px;height:1px;background:#e0dcd4"></div>
<div style="left:860px;top:375px;width:40px;height:1px;background:#e0dcd4"></div>
<div style="left:860px;top:392px;width:40px;height:1px;background:#e0dcd4"></div>
<div style="left:860px;top:409px;width:40px;height:1px;background:#e0dcd4"></div>
<div style="left:860px;top:426px;width:40px;height:1px;background:#e0dcd4"></div>
<svg style="left:867px;top:309px;" width="11" height="14" viewBox="0 0 11 14"><path d="M0.500 0.500h7l3 3v10h-10z" fill="#fffef4" stroke="#b8a060" stroke-width=".9"/><text x="2.3" y="11.3" font-family="Liberation Sans,sans-serif" font-size="10.5" font-weight="bold" fill="#2a5ab8">J</text></svg>
<span class="t" style="left:882px;top:309.1px;font-size:11px;line-height:14px;color:#000;letter-spacing:0.109px;">test/ClearCaseCommandFind.java</span>
<svg style="left:867px;top:326px;" width="11" height="14" viewBox="0 0 11 14"><path d="M0.500 0.500h7l3 3v10h-10z" fill="#fffef4" stroke="#b8a060" stroke-width=".9"/><text x="2.3" y="11.3" font-family="Liberation Sans,sans-serif" font-size="10.5" font-weight="bold" fill="#2a5ab8">J</text></svg>
<span class="t" style="left:882px;top:326.1px;font-size:11px;line-height:14px;color:#000;letter-spacing:0.109px;">test/ClearCaseUtils.java</span>
<svg style="left:288px;top:453px;overflow:hidden;" width="612" height="30" viewBox="0 0 612 30"><path d="M0.500 30V5.500Q0.500 0.500 5.500 0.500H620" fill="none" stroke="#8c8c8c"/><path d="M0.500 23.500H620M0.500 28.500H620" stroke="#8c8c8c"/></svg>
<svg style="left:288px;top:485.5px;overflow:hidden;" width="613" height="135.5" viewBox="0 0 613 135.5"><defs><linearGradient id="gw" x1="0" y1="0" x2="0" y2="1"><stop offset="0" stop-color="#ffffff"/><stop offset="1" stop-color="#d4d0c8"/></linearGradient></defs><path d="M0.5 24.0V5.5Q0.5 0.5 5.5 0.5H66C78.92 0.5 83.68 23.5 100 23.5V24.0Z" fill="url(#gw)"/><path d="M66 0.5H618" fill="none" stroke="#8c8c8c"/><path d="M0.5 135.0V5.5Q0.5 0.5 5.5 0.5H66" fill="none" stroke="#8c8c8c"/><path d="M100 23.5H618" fill="none" stroke="#8c8c8c"/><path d="M66 0.5C78.92 0.5 83.68 23.5 100 23.5" fill="none" stroke="#8c8c8c"/></svg>
<svg style="left:292px;top:489px;" width="16" height="16" viewBox="0 0 16 16"><rect x="3.500" y="2.500" width="10" height="11" fill="#f4f6fc" stroke="#d0a860" stroke-width=".9"/><rect x="6" y="0.500" width="5" height="3" fill="#e0e4f0" stroke="#8a9ab8" stroke-width=".7"/><path d="M0.500 8.500l3 3 5-6.500" stroke="#2a5ac8" stroke-width="1.700" fill="none"/><path d="M10 7v4M9 11h2.500" stroke="#7a8ab8" stroke-width=".8"/></svg>
<span class="t" style="left:311.6px;top:490.6px;font-size:11px;line-height:14px;color:#000;letter-spacing:-0.384px;">Tasks</span>
<svg style="left:345.5px;top:491.5px;" width="12" height="12" viewBox="0 0 11 11"><path d="M0.800 2.800L2.800 0.800 5.500 3.500 8.200 0.800 10.200 2.800 7.500 5.500 10.200 8.200 8.200 10.200 5.500 7.500 2.800 10.200 0.800 8.200 3.500 5.500Z" fill="#f4f4f4" stroke="#404040" stroke-width="1" stroke-linejoin="miter"/></svg>
<svg style="left:383px;top:490px;" width="15" height="15" viewBox="0 0 15 15"><rect x="0.500" y="0.500" width="14" height="14" fill="#f8f8fc" stroke="#b8c0d8" stroke-width=".8"/><circle cx="5" cy="4.500" r="2.500" fill="#e04040"/><path d="M5 8.500l3 5h-6z" fill="#f0a020"/><path d="M9 4h5M9 7h5M9 11h5" stroke="#8a9ad0" stroke-width="1"/></svg>
<span class="t" style="left:290.3px;top:511.2px;font-size:11px;line-height:14px;color:#000;letter-spacing:-0.251px;">0 items</span>
<div style="left:290px;top:526px;width:610px;height:80px;background:#fff"></div>
<div style="left:290px;top:526px;width:40px;height:17px;background:#d4d0c8;box-sizing:border-box;border-right:1px solid #404040;border-bottom:1px solid #404040;border-top:1px solid #fff;border-left:1px solid #fff"></div>
<div style="left:291px;top:527px;width:38px;height:15px;box-sizing:border-box;border-right:1px solid #808080;border-bottom:1px solid #808080"></div>
<div style="left:330px;top:526px;width:25px;height:17px;background:#d4d0c8;box-sizing:border-box;border-right:1px solid #404040;border-bottom:1px solid #404040;border-top:1px solid #fff;border-left:1px solid #fff"></div>
<div style="left:331px;top:527px;width:23px;height:15px;box-sizing:border-box;border-right:1px solid #808080;border-bottom:1px solid #808080"></div>
<div style="left:355px;top:526px;width:165px;height:17px;background:#d4d0c8;box-sizing:border-box;border-right:1px solid #404040;border-bottom:1px solid #404040;border-top:1px solid #fff;border-left:1px solid #fff"></div>
<div style="left:356px;top:527px;width:163px;height:15px;box-sizing:border-box;border-right:1px solid #808080;border-bottom:1px solid #808080"></div>
<span class="t" style="left:361.5px;top:528.4px;font-size:11px;line-height:14px;color:#000;letter-spacing:-0.047px;">Description</span>
<div style="left:520px;top:526px;width:162px;height:17px;background:#d4d0c8;box-sizing:border-box;border-right:1px solid #404040;border-bottom:1px solid #404040;border-top:1px solid #fff;border-left:1px solid #fff"></div>
<div style="left:521px;top:527px;width:160px;height:15px;box-sizing:border-box;border-right:1px solid #808080;border-bottom:1px solid #808080"></div>
<span class="t" style="left:612px;top:528.4px;font-size:11px;line-height:14px;color:#000;letter-spacing:-0.26px;">Resource</span>
<div style="left:682px;top:526px;width:100px;height:17px;background:#d4d0c8;box-sizing:border-box;border-right:1px solid #404040;border-bottom:1px solid #404040;border-top:1px solid #fff;border-left:1px solid #fff"></div>
<div style="left:683px;top:527px;width:98px;height:15px;box-sizing:border-box;border-right:1px solid #808080;border-bottom:1px solid #808080"></div>
<span class="t" style="left:687.8px;top:528.4px;font-size:11px;line-height:14px;color:#000;letter-spacing:-0.357px;">Path</span>
<div style="left:782px;top:526px;width:75px;height:17px;background:#d4d0c8;box-sizing:border-box;border-right:1px solid #404040;border-bottom:1px solid #404040;border-top:1px solid #fff;border-left:1px solid #fff"></div>
<div style="left:783px;top:527px;width:73px;height:15px;box-sizing:border-box;border-right:1px solid #808080;border-bottom:1px solid #808080"></div>
<span class="t" style="left:788px;top:528.4px;font-size:11px;line-height:14px;color:#000;letter-spacing:-0.136px;">Location</span>
<div style="left:857px;top:526px;width:143px;height:17px;background:#d4d0c8;box-sizing:border-box;border-right:1px solid #404040;border-bottom:1px solid #404040;border-top:1px solid #fff;border-left:1px solid #fff"></div>
<div style="left:858px;top:527px;width:141px;height:15px;box-sizing:border-box;border-right:1px solid #808080;border-bottom:1px solid #808080"></div>
<span class="t" style="left:863.8px;top:528.4px;font-size:11px;line-height:14px;color:#000;letter-spacing:-0.162px;">Type</span>
<span class="t" style="left:340.2px;top:528.2px;font-size:11px;line-height:14px;color:#1a3a9a;font-weight:bold;">!</span>
<svg style="left:306px;top:531px;" width="9" height="6" viewBox="0 0 9 6"><path d="M0 5.500h8l-4-5z" fill="#8e8c88"/></svg>
<div style="left:329px;top:543px;width:1px;height:62px;background:#e0dcd4"></div>
<div style="left:354px;top:543px;width:1px;height:62px;background:#e0dcd4"></div>
<div style="left:519px;top:543px;width:1px;height:62px;background:#e0dcd4"></div>
<div style="left:681px;top:543px;width:1px;height:62px;background:#e0dcd4"></div>
<div style="left:781px;top:543px;width:1px;height:62px;background:#e0dcd4"></div>
<div style="left:856px;top:543px;width:1px;height:62px;background:#e0dcd4"></div>
<div style="left:290px;top:559px;width:610px;height:1px;background:#e0dcd4"></div>
<div style="left:290px;top:576px;width:610px;height:1px;background:#e0dcd4"></div>
<div style="left:290px;top:592px;width:610px;height:1px;background:#e0dcd4"></div>
<div style="left:396px;top:205px;width:227px;height:410px;background:#d4d0c8;box-sizing:border-box;border:1px solid;border-color:#d4d0c8 #4c4c4c #4c4c4c #d4d0c8"></div>
<div style="left:397px;top:206px;width:225px;height:408px;box-sizing:border-box;border:1px solid;border-color:#fff #8c8c8c #8c8c8c #fff"></div>
<svg style="left:416px;top:212px;" width="16" height="16" viewBox="0 0 16 16"><path d="M1 3h7v2h-4v4h2.500l-4 5-4-5h2.500z" fill="#e04030" stroke="#a01810" stroke-width=".6"/><path d="M7.500 2.500v10c0 2 7 2 7 0v-10z" fill="#f4c040" stroke="#c08a18" stroke-width=".7"/><ellipse cx="11" cy="2.500" rx="3.500" ry="1.500" fill="#fbe890" stroke="#c08a18" stroke-width=".7"/><path d="M9 5v8" stroke="#fdf0b0" stroke-width="1.500"/></svg>
<span class="t" style="left:433.4px;top:211.9px;font-size:11px;line-height:14px;color:#000;letter-spacing:-0.134px;">Checkout</span>
<div style="left:399px;top:232px;width:220px;height:1px;background:#808080"></div>
<div style="left:399px;top:233px;width:220px;height:1px;background:#fff"></div>
<svg style="left:416px;top:240px;" width="16" height="16" viewBox="0 0 16 16"><path d="M8 1v4M8 5c-5 0-5 3-5 6M8 5c5 0 5 3 5 6" stroke="#6aa8c0" stroke-width="2.200" fill="none"/><path d="M8 1v4M8 5c-5 0-5 3-5 6M8 5c5 0 5 3 5 6" stroke="#d8f0f8" stroke-width=".9" fill="none"/><path d="M0 10h6l-3 4zM10 10h6l-3 4z" fill="#8ac8e0" stroke="#4a88a0" stroke-width=".7"/><path d="M12.500 0l.8 1.800 1.900.2-1.400 1.300.4 1.900-1.700-1-1.700 1 .4-1.900-1.400-1.300 1.900-.2z" fill="#f6d04a" stroke="#c89a10" stroke-width=".5"/></svg>
<span class="t" style="left:433.4px;top:240.9px;font-size:11px;line-height:14px;color:#000;letter-spacing:0.05px;">Create Branch...</span>
<span class="t" style="left:434.4px;top:262.1px;font-size:11px;line-height:14px;color:#fff;letter-spacing:-0.216px;">Delete Branch</span>
<span class="t" style="left:433.4px;top:261.1px;font-size:11px;line-height:14px;color:#808080;letter-spacing:-0.216px;">Delete Branch</span>
<svg style="left:416px;top:280px;" width="16" height="16" viewBox="0 0 16 16"><path d="M0.500 3v9h3" stroke="#3a5ab8" fill="none"/><path d="M2 2c2-2 6-2 8 0v3h-8z" fill="#5a8ad8" stroke="#2a4a9a" stroke-width=".6"/><rect x="4.500" y="7.500" width="11" height="8" fill="#e8eefc" stroke="#3a5ab8" stroke-width=".9"/><text x="5.6" y="14.3" font-family="Liberation Sans,sans-serif" font-size="6.2" font-weight="bold" fill="#1a2a6a">1.0</text><path d="M13 0l.8 1.800 1.900.2-1.400 1.300.4 1.900-1.700-1-1.700 1 .4-1.900-1.400-1.300 1.900-.2z" fill="#f6d04a" stroke="#c89a10" stroke-width=".5"/></svg>
<span class="t" style="left:433.4px;top:281.4px;font-size:11px;line-height:14px;color:#000;letter-spacing:0.202px;">Create Tag...</span>
<div style="left:399px;top:301px;width:220px;height:1px;background:#808080"></div>
<div style="left:399px;top:302px;width:220px;height:1px;background:#fff"></div>
<span class="t" style="left:433.4px;top:308.1px;font-size:11px;line-height:14px;color:#000;letter-spacing:0.095px;">Create Patch...</span>
<svg style="left:416px;top:327px;" width="16" height="16" viewBox="0 0 16 16"><path d="M8 0v4M5 1l6 3M11 1l-6 3M8 16v-4M5 15l6-3M11 15l-6-3" stroke="#5a9ae0" stroke-width=".9"/><path d="M5 5c-3 0-4 2-4 3.500s1 3.500 4 3.500M11 5c3 0 4 2 4 3.500s-1 3.500-4 3.500" stroke="#707070" stroke-width="1.800" fill="none"/><path d="M5 7c2-1 4 1 6 0M5 10c2 1 4-1 6 0" stroke="#505050" stroke-width="1.300" fill="none"/></svg>
<span class="t" style="left:433.4px;top:327.6px;font-size:11px;line-height:14px;color:#000;letter-spacing:-0.222px;">Cherry Pick</span>
<span class="t" style="left:433.4px;top:345.2px;font-size:11px;line-height:14px;color:#000;letter-spacing:-0.134px;">Revert Commit</span>
<svg style="left:417.5px;top:366px;" width="12" height="13" viewBox="0 0 12 13"><path d="M1.200 0.500C1.200 4 3 5 6 6M10.800 0.500C10.800 4 9 5 6 6" stroke="#d8a020" stroke-width="2.400" fill="none"/><path d="M1.200 0.500C1.200 4 3 5 6 6M10.800 0.500C10.800 4 9 5 6 6" stroke="#fff2b8" stroke-width=".9" fill="none"/><path d="M4.800 5.500V8.300H2.800L6 12.500 9.200 8.300H7.200V5.500Z" fill="#f8d060" stroke="#c8901c" stroke-width=".8"/></svg>
<span class="t" style="left:433.4px;top:364.6px;font-size:11px;line-height:14px;color:#000;letter-spacing:-0.276px;">Merge</span>
<svg style="left:417.5px;top:383.5px;" width="12" height="17" viewBox="0 0 12 17"><rect x="8.300" y="0.500" width="2.800" height="11" fill="#b8e8a8" stroke="#3a9a3a" stroke-width=".9"/><rect x="2.800" y="0.500" width="2.800" height="8" fill="#f4f0b0" stroke="#3a9a3a" stroke-width=".9"/><path d="M11.100 11.500C11.100 13 9 13 7 12.500" stroke="#3a9a3a" stroke-width=".9" fill="none"/><path d="M0.500 9.500H8L4.200 16Z" fill="#4cb84c" stroke="#2a8a2a" stroke-width=".8"/></svg>
<span class="t" style="left:433.4px;top:384.4px;font-size:11px;line-height:14px;color:#000;letter-spacing:0.017px;">Rebase on Top of</span>
<div style="left:399px;top:405px;width:220px;height:1px;background:#808080"></div>
<div style="left:399px;top:406px;width:220px;height:1px;background:#fff"></div>
<svg style="left:415.7px;top:415.3px;" width="16" height="12" viewBox="0 0 16 12"><path d="M6 2.300H11.500V0.400L15.600 3.700 11.500 7V5.100H6Z" fill="#f8d060" stroke="#c8901c" stroke-width=".8"/><path d="M10.500 6.300H5V4.400L0.400 7.700 5 11V9.100H10.500Z" fill="#b0dcec" stroke="#5a98b0" stroke-width=".8"/></svg>
<span class="t" style="left:433.4px;top:413.5px;font-size:11px;line-height:14px;color:#000;letter-spacing:-0.067px;">Reset</span>
<svg style="left:609px;top:416.5px;" width="4" height="7" viewBox="0 0 4 7"><path d="M0 0V7L4 3.500Z" fill="#000"/></svg>
<div style="left:399px;top:434px;width:220px;height:1px;background:#808080"></div>
<div style="left:399px;top:435px;width:220px;height:1px;background:#fff"></div>
<span class="t" style="left:433.4px;top:440.5px;font-size:11px;line-height:14px;color:#000;letter-spacing:-0.048px;">Quick Diff</span>
<svg style="left:609px;top:444.5px;" width="4" height="7" viewBox="0 0 4 7"><path d="M0 0V7L4 3.500Z" fill="#000"/></svg>
<div style="left:399px;top:467px;width:221px;height:16px;background:#0a246a"></div>
<span class="t" style="left:433.4px;top:467.4px;font-size:11px;line-height:14px;color:#fff;letter-spacing:-0.082px;">Add To Review</span>
<div style="left:398px;top:485.0px;width:223px;height:14px;overflow:hidden">
<span class="t" style="left:35.39999999999998px;top:0.0px;font-size:11px;line-height:14px;color:#000;letter-spacing:-0.27px;">Copy</span></div>
<span class="t" style="left:568.3px;top:485.0px;font-size:11px;line-height:14px;color:#000;letter-spacing:-0.046px;">Ctrl+C</span>
<svg style="left:416px;top:502px;" width="16" height="16" viewBox="0 0 16 16"><path d="M0.500 5.500h5l1.500-2h5v2h3l-1 9h-13.500z" fill="#f0c050" stroke="#b8801a" stroke-width=".9"/><path d="M2 8.500h13.500l-2 6h-13z" fill="#f8dc80" stroke="#b8801a" stroke-width=".8"/><rect x="4" y="0.500" width="10" height="8" fill="#fff" stroke="#6a8ac8" stroke-width=".8"/><text x="5" y="7.3" font-family="Liberation Sans,sans-serif" font-size="7.5" font-weight="bold" fill="#2a5ab8">A</text><path d="M11 3h2M11 5h2" stroke="#8a9ad0" stroke-width=".8"/></svg>
<span class="t" style="left:433.4px;top:503.6px;font-size:11px;line-height:14px;color:#000;letter-spacing:-0.274px;">Open in Commit Viewer</span>
<div style="left:399px;top:523px;width:220px;height:1px;background:#808080"></div>
<div style="left:399px;top:524px;width:220px;height:1px;background:#fff"></div>
<svg style="left:403px;top:534.5px;" width="8" height="8" viewBox="0 0 8 8"><path d="M0.500 3.500L3 6 7.500 0.800" stroke="#000" stroke-width="1.800" fill="none"/></svg>
<span class="t" style="left:433.4px;top:530.6px;font-size:11px;line-height:14px;color:#000;letter-spacing:-0.235px;">Revision Details</span>
<svg style="left:403px;top:551.5px;" width="8" height="8" viewBox="0 0 8 8"><path d="M0.500 3.500L3 6 7.500 0.800" stroke="#000" stroke-width="1.800" fill="none"/></svg>
<span class="t" style="left:433.4px;top:547.6px;font-size:11px;line-height:14px;color:#000;letter-spacing:-0.27px;">Revision Comment</span>
<div style="left:399px;top:567px;width:220px;height:1px;background:#808080"></div>
<div style="left:399px;top:568px;width:220px;height:1px;background:#fff"></div>
<svg style="left:416px;top:574px;" width="16" height="16" viewBox="0 0 16 16"><circle cx="6.500" cy="9.500" r="5" fill="#8a86c0" stroke="#5a5690" stroke-width=".8"/><path d="M2 8.500h9M2.500 11h8" stroke="#c8c4e8" stroke-width=".8"/><path d="M12 0l1 2.200 2.300.3-1.700 1.600.4 2.300-2-1.100-2 1.100.4-2.300-1.700-1.600 2.300-.3z" fill="#f6d04a" stroke="#c89a10" stroke-width=".5"/></svg>
<span class="t" style="left:433.4px;top:575.3px;font-size:11px;line-height:14px;color:#000;letter-spacing:0.061px;">Add to Task Context</span>
<svg style="left:416px;top:594px;" width="16" height="16" viewBox="0 0 16 16"><rect x="2.500" y="2.500" width="10" height="12" fill="#f4f6fc" stroke="#8a9ab8"/><rect x="5" y="0.500" width="5" height="3" fill="#c8d0e8" stroke="#6a7aa8" stroke-width=".7"/></svg>
<span class="t" style="left:433.4px;top:594.2px;font-size:11px;line-height:14px;color:#000;letter-spacing:-0.139px;">Open Corresponding Task</span>
<svg style="left:388px;top:457px;" width="244" height="36" viewBox="0 0 244 36"><rect x="1.700" y="3.500" width="236.500" height="27.500" rx="8" ry="8" fill="none" stroke="#fb7412" stroke-width="3"/></svg>
</body></html>
